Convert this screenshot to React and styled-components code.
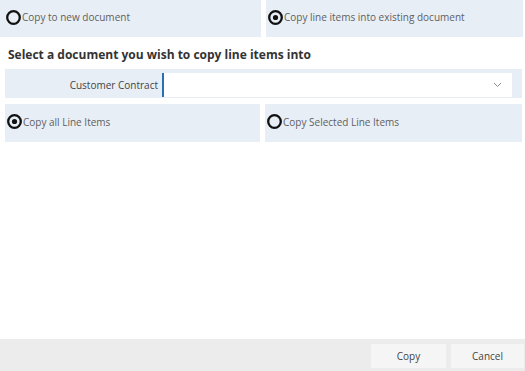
import styled, { createGlobalStyle } from 'styled-components';

const GlobalStyle = createGlobalStyle`
  html, body {
    margin: 0;
    padding: 0;
    background: #ffffff;
    font-family: "Open Sans", "Liberation Sans", sans-serif;
  }
`;

const Page = styled.div`
  width: 525px;
  height: 371px;
  display: flex;
  flex-direction: column;
  overflow: hidden;
`;

const Content = styled.div`
  flex: 1;
`;

const OptionRow = styled.div`
  display: grid;
  grid-template-columns: ${p => p.$cols};
  column-gap: 5px;
  padding: ${p => p.$pad};
`;

const OptionPanel = styled.label`
  display: flex;
  align-items: center;
  gap: 1px;
  height: ${p => p.$h}px;
  padding: 0 0 3px ${p => p.$indent}px;
  box-sizing: border-box;
  background: #e8eef6;
  font-size: 10px;
  color: #5f5f5f;
  cursor: pointer;

  svg {
    flex-shrink: 0;
  }
`;

const Heading = styled.h3`
  margin: 0;
  padding: 9px 8px 0;
  height: 28px;
  box-sizing: border-box;
  font-size: 12px;
  font-weight: 700;
  color: #333;
`;

const FieldRow = styled.div`
  display: flex;
  align-items: stretch;
  margin: 4px 3px 0 5px;
  height: 29px;
  padding: 4px 10px 1px 0;
  box-sizing: border-box;
  background: #e8eef6;
`;

const FieldLabel = styled.div`
  width: 153px;
  padding-right: 4px;
  display: flex;
  align-items: center;
  justify-content: flex-end;
  font-size: 10px;
  color: #444;
`;

const Select = styled.div`
  flex: 1;
  background: #fff;
  border-left: 2px solid #2a6fb0;
  display: flex;
  align-items: center;
  justify-content: flex-end;
  padding-right: 10px;
`;

const Footer = styled.div`
  height: 32px;
  background: #ececec;
  display: flex;
  justify-content: flex-end;
  align-items: flex-start;
  gap: 5px;
  padding: 5px 1px 0 0;
  box-sizing: border-box;
`;

const Button = styled.button`
  width: ${p => p.$w}px;
  height: 24px;
  border: none;
  background: #f5f5f5;
  font-family: "Open Sans", "Liberation Sans", sans-serif;
  font-size: 10px;
  color: #444;
  padding: 0;
`;

const RadioIcon = ({ on }) => (
  <svg width="15" height="15" viewBox="0 0 15 15">
    <circle cx="7.5" cy="7.5" r="6.3" fill="none" stroke="#111" strokeWidth="2.3" />
    {on && <circle cx="7.5" cy="7.5" r="2.6" fill="#111" />}
  </svg>
);

const Radio = ({ on, h, indent = 2, children }) => (
  <OptionPanel $h={h} $indent={indent}>
    <RadioIcon on={on} />
    <span>{children}</span>
  </OptionPanel>
);

const App = () => {
  return (
    <>
      <GlobalStyle />
      <Page>
        <Content>
          <OptionRow $cols="261px 257px" $pad="0 2px 0 0">
            <Radio h={37} indent={6}>Copy to new document</Radio>
            <Radio h={37} on>Copy line items into existing document</Radio>
          </OptionRow>
          <Heading>Select a document you wish to copy line items into</Heading>
          <FieldRow>
            <FieldLabel>Customer Contract</FieldLabel>
            <Select>
              <svg width="9" height="6" viewBox="0 0 9 6">
                <path d="M1 1l3.5 3.5L8 1" fill="none" stroke="#8a8a8a" strokeWidth="1" />
              </svg>
            </Select>
          </FieldRow>
          <OptionRow $cols="255px 257px" $pad="6px 3px 0 5px">
            <Radio h={38} on>Copy all Line Items</Radio>
            <Radio h={38}>Copy Selected Line Items</Radio>
          </OptionRow>
        </Content>
        <Footer>
          <Button $w={75}>Copy</Button>
          <Button $w={73}>Cancel</Button>
        </Footer>
      </Page>
    </>
  );
};

export default App;
